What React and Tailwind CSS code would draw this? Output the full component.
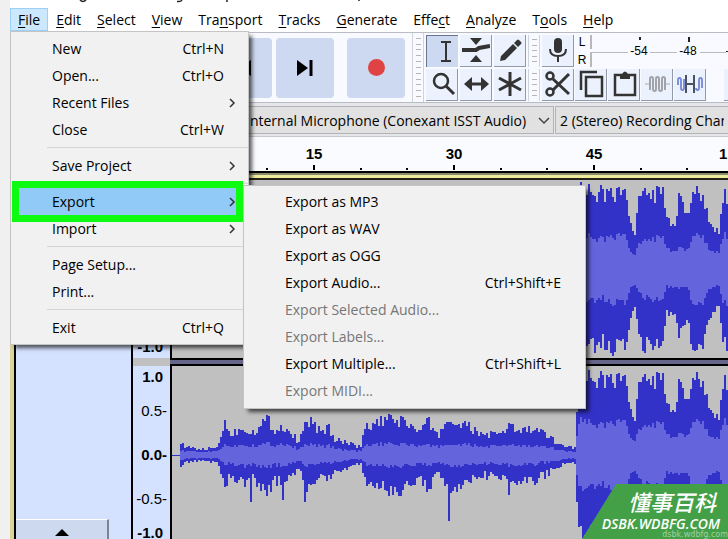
import { Pause, Play, Square } from "lucide-react";

const menus = [
  ["", "F", "ile"],
  ["", "E", "dit"],
  ["", "S", "elect"],
  ["", "V", "iew"],
  ["Tra", "n", "sport"],
  ["", "T", "racks"],
  ["", "G", "enerate"],
  ["Effe", "c", "t"],
  ["", "A", "nalyze"],
  ["T", "o", "ols"],
  ["", "H", "elp"],
];

const fileMenu = [
  { label: "New", keys: "Ctrl+N" },
  { label: "Open...", keys: "Ctrl+O" },
  { label: "Recent Files", sub: true },
  { label: "Close", keys: "Ctrl+W" },
  null,
  { label: "Save Project", sub: true },
  null,
  { label: "Export", sub: true, active: true },
  { label: "Import", sub: true },
  null,
  { label: "Page Setup..." },
  { label: "Print..." },
  null,
  { label: "Exit", keys: "Ctrl+Q" },
];

const exportMenu = [
  { label: "Export as MP3" },
  { label: "Export as WAV" },
  { label: "Export as OGG" },
  { label: "Export Audio...", keys: "Ctrl+Shift+E" },
  { label: "Export Selected Audio...", disabled: true },
  { label: "Export Labels...", disabled: true },
  { label: "Export Multiple...", keys: "Ctrl+Shift+L" },
  { label: "Export MIDI...", disabled: true },
];

// [x, peak, rms] along the clip, in px from the start of the track
const envelope = [
  [8, 12, 5], [12, 8, 4], [30, 6, 3], [45, 8, 4], [47, 20, 7], [52, 32, 10], [58, 22, 9],
  [65, 26, 10], [71, 28, 11], [80, 24, 10], [94, 37, 12], [103, 26, 10], [112, 30, 12], [121, 19, 8],
  [127, 14, 6], [131, 30, 10], [137, 36, 11], [150, 22, 9], [154, 31, 10], [160, 18, 8],
  [173, 13, 5], [188, 8, 4], [191, 26, 9], [200, 32, 11], [225, 37, 11], [237, 31, 11],
  [246, 24, 9], [256, 34, 10], [264, 20, 9], [275, 36, 11], [290, 31, 11], [308, 22, 9],
  [333, 21, 9], [335, 38, 11], [341, 26, 10], [363, 26, 9], [378, 17, 7], [388, 11, 5],
  [401, 7, 3], [403, 10, 4], [405, 82, 36], [430, 76, 30], [440, 79, 34], [452, 77, 34],
  [458, 48, 18], [462, 35, 15], [467, 76, 26], [478, 77, 31], [490, 78, 32], [494, 48, 19],
  [502, 44, 18], [506, 72, 21], [515, 50, 18], [519, 80, 34], [530, 79, 36], [536, 50, 20],
  [546, 38, 17], [551, 74, 34], [560, 80, 36], [900, 78, 34],
];

// lone transients in the lower half
const spikes = { 78: 47, 132: 47, 276: 66, 110: 45, 53: 41 };

function noise(n) {
  const v = Math.sin(n * 12.9898) * 43758.5453;
  return v - Math.floor(v);
}

function levelAt(x, key) {
  const i = envelope.findIndex((p) => p[0] > x);
  const a = envelope[i - 1];
  const b = envelope[i];
  return a[key] + ((b[key] - a[key]) * (x - a[0])) / (b[0] - a[0]);
}

function buildPath(key) {
  const top = [];
  const bottom = [];
  for (let x = 8; x < 700; x += 2) {
    const level = levelAt(x, key);
    const amount = x > 404 ? 0.25 : 0.42;
    const up = Math.round(level * (1 + amount * (noise(x) - 0.6)));
    const drop = (key === 1 && spikes[x]) || level * (1 + amount * (noise(x + 5000) - 0.6));
    top.push(`L${x} ${89 - up}H${x + 2}`);
    bottom.unshift(`L${x + 2} ${89 + Math.round(drop)}H${x}`);
  }
  return `M8 89${top.join("")}${bottom.join("")}Z`;
}

const peakPath = buildPath(1);
const rmsPath = buildPath(2);

function Waveform() {
  return (
    <svg className="block h-full w-full" shapeRendering="crispEdges" aria-hidden="true">
      <path d="M0 89H8" stroke="#3232c8" />
      <path d={peakPath} fill="#3232c8" />
      <path d={rmsPath} fill="#6464dc" />
    </svg>
  );
}

function MenuList({ items, className }) {
  return (
    <div role="menu" className={`absolute border border-[#c4c4c4] bg-[#f1f1f1] shadow-[4px_4px_4px_-1px_rgba(0,0,0,0.65)] ${className}`}>
      {items.map((item, i) =>
        item ? (
          <button
            key={item.label}
            role="menuitem"
            disabled={item.disabled}
            className={`relative flex h-[27px] w-full items-center justify-between pr-6 pl-[41px] whitespace-nowrap ${
              item.disabled ? "text-[#767676]" : "text-black"
            }`}
          >
            {item.active && (
              <span className="absolute -inset-y-[7px] right-[5px] left-px border-[7px] border-[#0cfb10] bg-[#91c9f7]" />
            )}
            <span className="relative">{item.label}</span>
            {item.keys && <span>{item.keys}</span>}
            {item.sub && (
              <svg className="relative -mr-4 h-3 w-3" viewBox="0 0 12 12" fill="none" stroke="#333" strokeWidth="1.5" aria-hidden="true">
                <path d="M2 2L6 6L2 10" />
              </svg>
            )}
          </button>
        ) : (
          <div key={i} className="flex h-[9px] items-center pl-9">
            <hr className="w-full border-[#d5d5d5]" />
          </div>
        )
      )}
    </div>
  );
}

function TransportButton({ label, className = "", children }) {
  return (
    <button aria-label={label} className={`flex h-[60px] w-[58px] shrink-0 items-center justify-center rounded-sm bg-[#cdd9f0] ${className}`}>
      {children}
    </button>
  );
}

function ToolButton({ label, active, children }) {
  return (
    <button
      aria-label={label}
      className={`flex h-8 w-8 shrink-0 items-center justify-center ${
        active
          ? "border-t border-l border-[#6a7390] bg-[#ccd9f1]"
          : "border-r border-b border-[#9299a8] bg-[#ecf2fd]"
      }`}
    >
      <svg className="h-7 w-7" viewBox="0 0 28 28" fill="none" stroke="#333" strokeWidth="2.5" aria-hidden="true">
        {children}
      </svg>
    </button>
  );
}

function Grip({ className = "" }) {
  return (
    <div className={`flex w-3 shrink-0 flex-col items-center justify-evenly border-x border-[#d0d3da] ${className}`}>
      {Array.from({ length: className ? 5 : 11 }, (_, i) => (
        <span key={i} className="h-px w-[5px] bg-[#b5b5b5]" />
      ))}
    </div>
  );
}

function Toolbars() {
  return (
    <div className="flex h-[71px] border-y border-[#b9bcc2] bg-[#f8faff]">
      <div className="flex shrink-0 items-center gap-1 pr-[7px] pl-[18px]">
        <TransportButton label="Pause"><Pause size={22} /></TransportButton>
        <TransportButton label="Play"><Play size={22} /></TransportButton>
        <TransportButton label="Stop"><Square size={22} /></TransportButton>
        <TransportButton label="Skip to Start">
          <svg className="h-4 w-4" viewBox="0 0 16 16" aria-hidden="true">
            <path d="M0 0H3V16H0ZM16 0V16L4 8Z" />
          </svg>
        </TransportButton>
        <TransportButton label="Skip to End">
          <svg className="h-4 w-4" viewBox="0 0 16 16" aria-hidden="true">
            <path d="M0 0L11 8L0 16ZM12.5 0H15.5V16H12.5Z" />
          </svg>
        </TransportButton>
        <TransportButton label="Record" className="ml-[9px]">
          <span className="h-[17px] w-[17px] rounded-full bg-[#e04343]" />
        </TransportButton>
      </div>
      <Grip />
      <div className="grid shrink-0 grid-cols-3 content-center gap-x-[2px] gap-y-[2px] pl-[2px]">
        <ToolButton label="Selection Tool" active>
          <path d="M12 5H22M12 24H22M17 5V24" strokeWidth="2" />
        </ToolButton>
        <ToolButton label="Envelope Tool">
          <path d="M0 14H14L17 12L28 10" strokeWidth="4" />
          <path d="M8 2H20L14 9ZM8 26H20L14 19Z" fill="#333" stroke="none" />
        </ToolButton>
        <ToolButton label="Draw Tool">
          <path d="M4 25L5 20L17 8L21 12L9 24ZM18 7L21 4Q22 3 23 4L25 6Q26 7 25 8L22 11Z" fill="#333" stroke="none" />
        </ToolButton>
        <ToolButton label="Zoom Tool">
          <circle cx="13" cy="11" r="7" />
          <path d="M18 16L26 24" strokeWidth="3" />
        </ToolButton>
        <ToolButton label="Time Shift Tool">
          <path d="M7 14H21" strokeWidth="3" />
          <path d="M10 7V21L2 14ZM19 7V21L27 14Z" fill="#333" stroke="none" />
        </ToolButton>
        <ToolButton label="Multi-Tool">
          <path d="M14 2V26M3 8L25 20M25 8L3 20" strokeWidth="3" />
        </ToolButton>
      </div>
      <div className="flex min-w-0 flex-1 flex-col justify-center gap-[2px]">
        <div className="flex h-8">
          <Grip className="mr-[2px] ml-[2px]" />
          <ToolButton label="Record Meter">
            <rect x="10" y="2" width="8" height="15" rx="4" fill="#333" stroke="none" />
            <path d="M6 13Q6 20 14 20Q22 20 22 13M14 20V26" strokeWidth="2" />
          </ToolButton>
          <div className="flex w-4 shrink-0 flex-col justify-between text-center font-['Liberation_Sans',sans-serif] text-[12px] leading-[14px]">
            <span>L</span>
            <span>R</span>
          </div>
          <svg className="h-8 min-w-0 flex-1 font-['Liberation_Sans',sans-serif] text-[12px]" aria-label="Recording level">
            <path d="M1 0V14M1 18V32" stroke="#b8b8b8" strokeWidth="2" />
            <path d="M0 17.5H38M60 17.5H87M110 17.5H136" stroke="#bbb" />
            <path d="M50 2V5M99 2V7" stroke="#222" strokeWidth="2" />
            <text x="49" y="20" textAnchor="middle">-54</text>
            <text x="98" y="20" textAnchor="middle">-48</text>
            <path d="M136 16.5H140" stroke="#222" />
          </svg>
        </div>
        <div className="flex h-8 gap-px overflow-hidden">
          <Grip className="mr-px ml-[2px]" />
          <ToolButton label="Cut">
            <path d="M9 9L25 24M9 20L25 4" strokeWidth="3" />
            <circle cx="6" cy="6" r="3.5" />
            <circle cx="6" cy="22" r="3.5" />
          </ToolButton>
          <ToolButton label="Copy">
            <path d="M4 20V2H20M9 7H25V26H9Z" />
          </ToolButton>
          <ToolButton label="Paste">
            <path d="M5 5H25V25H5Z" />
            <path d="M10 4H12Q15 -1 18 4H20V9H10Z" fill="#333" stroke="none" />
          </ToolButton>
          <ToolButton label="Trim Audio">
            <path d="M2 14H7M22 14H27" stroke="#aaa" strokeWidth="1" />
            <path d="M7 20V9Q7 7 8.500 7Q10 7 10 9V19Q10 21 11.500 21Q13 21 13 19V9Q13 7 14.500 7Q16 7 16 9V19Q16 21 17.500 21Q19 21 19 19V9Q19 7 20.500 7Q22 7 22 9V20" stroke="#a2a2ab" strokeWidth="2" />
          </ToolButton>
          <ToolButton label="Silence Audio">
            <path d="M2 15V10Q2 8 3.500 8Q5 8 5 10V18Q5 20 6.500 20Q8 20 8 18V9M20 18Q20 20 21.500 20Q23 20 23 18V10Q23 8 24.500 8Q26 8 26 10V18" stroke="#7587d9" strokeWidth="1.800" />
            <path d="M10 5V23M18 5V23M10 14H18" stroke="#4d5160" strokeWidth="2" />
          </ToolButton>
          <div className="w-4 shrink-0" />
          <ToolButton label="Undo">
            <path d="M10 8L6 12L10 16M6 12H22" />
          </ToolButton>
        </div>
      </div>
    </div>
  );
}

function DeviceBar() {
  const box = "h-7 appearance-none border border-[#b4b4b4] bg-[#e1e1e1] text-black";
  return (
    <div className="flex border-b border-[#c5c8cc] bg-[#e4e6e9] pt-[3px] pb-[2px]">
      <select aria-label="Audio Host" className={`${box} w-[230px] shrink-0 px-1`}>
        <option>Windows DirectSound</option>
      </select>
      <div className="relative ml-px w-[313px] shrink-0">
        <select aria-label="Recording Device" className={`${box} w-full pl-1`}>
          <option>Internal Microphone (Conexant ISST Audio)</option>
        </select>
        <svg className="pointer-events-none absolute top-2 right-1 h-3 w-3" viewBox="0 0 12 12" fill="none" stroke="#444" strokeWidth="1.5" aria-hidden="true">
          <path d="M1 4L6 9L11 4" />
        </svg>
      </div>
      <select aria-label="Recording Channels" className={`${box} ml-px min-w-0 flex-1 border-r-0 pr-1 pl-1`}>
        <option>2 (Stereo) Recording Channels</option>
      </select>
    </div>
  );
}

function Ruler() {
  return (
    <div className="flex h-[34px] overflow-hidden bg-[#f9fbff] pl-[94px] font-['Liberation_Sans',sans-serif] text-[15px] leading-5 font-bold">
      {["0", "15", "30", "45", "1:00"].map((t) => (
        <div key={t} className="flex w-[140px] shrink-0 flex-col items-center justify-end">
          <span>{t}</span>
          <div className="mt-px flex h-[6px] w-full items-end justify-around pb-px">
            <span className="h-[2px] w-[2px] bg-black" />
            <span className="h-[5px] w-[2px] bg-black" />
            <span className="h-[2px] w-[2px] bg-black" />
          </div>
        </div>
      ))}
    </div>
  );
}

function Channel() {
  return (
    <div className="flex h-[178px]">
      <div className="flex w-[37px] shrink-0 flex-col justify-center gap-[14px] bg-[#d5e2ff] pr-[3px] text-right font-['Liberation_Sans',sans-serif] text-[15px] leading-5">
        <span className="pr-1 font-bold">1.0</span>
        <div className="flex flex-col gap-6">
          <span>0.5-</span>
          <span className="font-bold">0.0-</span>
          <span>-0.5-</span>
        </div>
        <span className="pr-1 font-bold">-1.0</span>
      </div>
      <div className="min-w-0 flex-1 border-l-2 border-black bg-[#c0c0c0]">
        <Waveform />
      </div>
    </div>
  );
}

function Watermark() {
  return (
    <div className="absolute right-0 bottom-0 flex h-[55px] w-[146px] flex-col items-end bg-[#43a047] pt-[2px] text-white [clip-path:polygon(34px_0,100%_0,100%_100%,0_100%)]">
      <span className="pr-3 font-['Noto_Sans_CJK_SC',sans-serif] text-[22px] leading-[31px] font-medium italic">懂事百科</span>
      <span className="pr-2 font-['Open_Sans',sans-serif] text-[14px] leading-[14px] font-semibold italic">DSBK.WDBFG.COM</span>
      <span className="font-['DejaVu_Sans',sans-serif] text-[8px] leading-[8px] text-white/50">dsbk.wdbfg.com</span>
    </div>
  );
}

export default function App() {
  return (
    <div className="relative h-screen overflow-hidden bg-[#f0f0f0] pl-[10px] font-['Open_Sans',sans-serif] text-[14px] text-black">
      <div className="h-[8px] overflow-hidden bg-white">
        <svg className="block h-[3px] w-[400px]" fill="none" stroke="#222" strokeWidth="1.5" aria-hidden="true">
          <path d="M70 0Q73 3 76 0M167 1.500Q171 2 172 0M217 0V2M349 0V1" />
        </svg>
      </div>
      <nav className="flex h-6 bg-white">
        {menus.map(([before, key, after], i) => (
          <button
            key={key + after}
            className={`h-[23px] border px-[7px] leading-5 ${i === 0 ? "border-[#9bd1f7] bg-[#cce8ff]" : "border-transparent"}`}
          >
            {before}
            <span className="underline decoration-1 underline-offset-2">{key}</span>
            {after}
          </button>
        ))}
      </nav>
      <Toolbars />
      <DeviceBar />
      <Ruler />
      <main className="border-t-2 border-black bg-[#c0c0c0]">
        <div className="h-[7px] border-t-2 border-b-2 border-t-[#8a8a70] border-b-[#222218] bg-[#f0ec9c]" />
        <div className="flex border-l-4 border-[#d9d59a]">
          <div className="flex h-[364px] w-[119px] shrink-0 flex-col justify-end border-x-2 border-black bg-[#d5e2ff]">
            <button aria-label="Collapse" className="flex h-[25px] w-[93px] items-center justify-center border-t border-r-2 border-t-white border-r-[#7c8498] bg-[#ccd9ef]">
              <span className="h-0 w-0 border-x-[7px] border-b-[7px] border-x-transparent border-b-black" />
            </button>
          </div>
          <div className="min-w-0 flex-1">
            <Channel />
            <div className="ml-[37px] h-2 border-y-2 border-black bg-[#666688]" />
            <Channel />
          </div>
        </div>
      </main>
      <MenuList items={fileMenu} className="top-[31px] left-[10px] w-[239px] py-[3px]" />
      <MenuList items={exportMenu} className="top-[185px] left-[243px] w-[343px] pt-[2px] pb-1" />
      <Watermark />
    </div>
  );
}
